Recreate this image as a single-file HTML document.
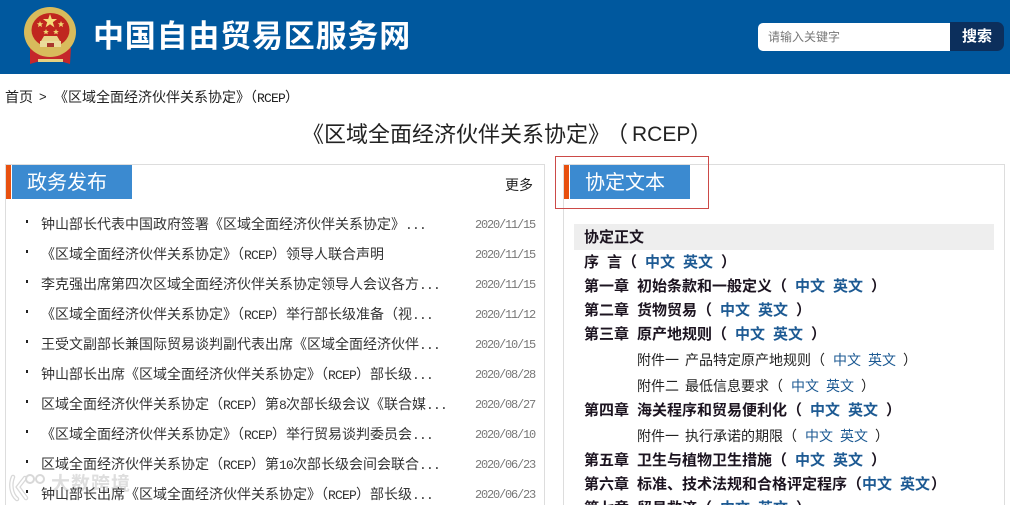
<!DOCTYPE html>
<html lang="zh-CN"><head><meta charset="utf-8"><style>
html,body{margin:0;padding:0;background:#fff}
#p{position:relative;width:1010px;height:505px;overflow:hidden;background:#fff;font-family:"Liberation Sans","Noto Sans CJK SC",sans-serif;color:#222}
#p div{position:absolute;white-space:nowrap}
.r{left:41px;font-size:14px;line-height:20px;height:20px;color:#333}
.m{font-family:"Liberation Mono",monospace;font-size:13px;letter-spacing:-.8px}
.d{left:475px;font:12px/20px "Liberation Mono",monospace;letter-spacing:-1.2px;color:#777;margin-top:1px}
.b{left:26px;width:2px;height:3px;background:#222}
.l{font-size:15px;line-height:20px;height:20px;font-weight:700;color:#1c1420;margin-top:1px}
.n{font-size:14px;line-height:20px;height:20px;color:#222;margin-top:1px}
.k{font-size:14px;line-height:20px;height:20px;color:#1d5a93;margin-top:1px}
.kb{font-size:15px;line-height:20px;height:20px;font-weight:700;color:#1d5a93;margin-top:1px}
</style></head><body><div id="p">
<div style="left:0;top:0;width:1010px;height:74px;background:#00589e"></div>
<svg style="position:absolute;left:20px;top:6px" width="60" height="60" viewBox="0 0 60 60">
<path d="M10 42 L10 58 L20 55 L40 55 L50 58 L51 42 Z" fill="#c5262b"/>
<ellipse cx="30" cy="26" rx="26" ry="25" fill="#d8bb5c"/>
<ellipse cx="30.500" cy="24" rx="19" ry="17" fill="#c0261f"/>
<path d="M13 38h35l-4 8H17z" fill="#d8bb5c"/>
<path d="M18 53h25v3H18z" fill="#e6d080"/>
<path d="M30 8l1.800 5h5.300l-4.300 3.200 1.600 5.200-4.400-3.100-4.400 3.100 1.600-5.200-4.300-3.200h5.300z" fill="#f5dc7a"/>
<g fill="#f0d670">
<path d="M20 15l.9 2.200 2.300.1-1.800 1.500.6 2.300-2-1.300-2 1.300.6-2.300-1.800-1.500 2.300-.1z"/>
<path d="M41 15l.9 2.200 2.300.1-1.800 1.500.6 2.300-2-1.300-2 1.300.6-2.300-1.800-1.500 2.300-.1z"/>
<path d="M26 23l.8 2 2.100.1-1.600 1.300.5 2-1.800-1.100-1.800 1.100.5-2-1.600-1.300 2.100-.1z"/>
<path d="M36 23l.8 2 2.100.1-1.600 1.300.5 2-1.800-1.100-1.800 1.100.5-2-1.600-1.300 2.100-.1z"/>
</g>
<path d="M24 30h13l3 5H21z" fill="#e8d488"/>
<path d="M20 35h21v6H20z" fill="#eadb9b"/>
<path d="M27 37h7v4h-7z" fill="#a9372c"/>
</svg>
<div style="left:93px;top:17px;font-size:31px;line-height:40px;font-weight:700;letter-spacing:.8px;color:#fff">中国自由贸易区服务网</div>
<div style="left:758px;top:23px;width:192px;height:28px;background:#fff;border-radius:5px 0 0 5px"></div>
<div style="left:950px;top:22px;width:54px;height:29px;background:#0c2f5c;border-radius:0 7px 7px 0"></div>
<div style="left:768px;top:27px;font-size:12px;line-height:20px;color:#777">请输入关键字</div>
<div style="left:962px;top:27px;font-size:15px;line-height:20px;font-weight:700;color:#fff">搜索</div>

<div style="left:5px;top:87px;font-size:14px;line-height:20px;color:#222">首页</div>
<div style="left:39px;top:87px;font-size:13px;line-height:20px;color:#222">&gt;</div>
<div style="left:54px;top:87px;font-size:14px;line-height:20px;color:#222">《区域全面经济伙伴关系协定》（<span class="m">RCEP</span>）</div>

<div style="left:302px;top:120px;font-size:22px;line-height:30px;color:#222">《区域全面经济伙伴关系协定》</div>
<div style="left:606px;top:120px;font-size:22px;line-height:30px;color:#222">（</div>
<div style="left:632px;top:120px;font-size:21px;line-height:30px;color:#222">RCEP</div>
<div style="left:690px;top:120px;font-size:22px;line-height:30px;color:#222">）</div>

<div style="left:5px;top:164px;width:538px;height:345px;border:1px solid #ddd"></div>
<div style="left:563px;top:164px;width:440px;height:345px;border:1px solid #ddd"></div>

<svg style="position:absolute;left:8px;top:472px" width="42" height="30" viewBox="0 0 42 30">
<path d="M5 5C2 12 3 22 9 27M17 6L10 15L18 26" fill="none" stroke="#d8d8d8" stroke-width="4.500" stroke-linecap="round"/>
<path d="M5 5C2 12 3 22 9 27M17 6L10 15L18 26" fill="none" stroke="#fff" stroke-width="2" stroke-linecap="round"/>
<circle cx="22" cy="7" r="4" fill="none" stroke="#d8d8d8" stroke-width="2"/><circle cx="32" cy="7" r="4" fill="none" stroke="#d8d8d8" stroke-width="2"/>
</svg>
<div style="left:51px;top:472px;font-size:19px;line-height:26px;font-weight:700;letter-spacing:1px;color:#dedede">大数跨境</div>

<div style="left:6px;top:165px;width:5px;height:34px;background:#e8500f"></div>
<div style="left:12px;top:165px;width:120px;height:34px;background:#3b8ad0"></div>
<div style="left:27px;top:168px;font-size:20px;line-height:30px;color:#fff">政务发布</div>
<div style="left:505px;top:175px;font-size:14px;line-height:20px;color:#222">更多</div>

<div style="left:564px;top:165px;width:5px;height:34px;background:#e8500f"></div>
<div style="left:570px;top:165px;width:120px;height:34px;background:#3b8ad0"></div>
<div style="left:585px;top:168px;font-size:20px;line-height:30px;color:#fff">协定文本</div>
<div style="left:555px;top:156px;width:152px;height:51px;border:1px solid #cc4a48"></div>

<div class="b" style="top:220px"></div><div class="r" style="top:214px">钟山部长代表中国政府签署《区域全面经济伙伴关系协定》<span class="m">...</span></div><div class="d" style="top:214px">2020/11/15</div>
<div class="b" style="top:250px"></div><div class="r" style="top:244px">《区域全面经济伙伴关系协定》（<span class="m">RCEP</span>）领导人联合声明</div><div class="d" style="top:244px">2020/11/15</div>
<div class="b" style="top:280px"></div><div class="r" style="top:274px">李克强出席第四次区域全面经济伙伴关系协定领导人会议各方<span class="m">...</span></div><div class="d" style="top:274px">2020/11/15</div>
<div class="b" style="top:310px"></div><div class="r" style="top:304px">《区域全面经济伙伴关系协定》（<span class="m">RCEP</span>）举行部长级准备（视<span class="m">...</span></div><div class="d" style="top:304px">2020/11/12</div>
<div class="b" style="top:340px"></div><div class="r" style="top:334px">王受文副部长兼国际贸易谈判副代表出席《区域全面经济伙伴<span class="m">...</span></div><div class="d" style="top:334px">2020/10/15</div>
<div class="b" style="top:370px"></div><div class="r" style="top:364px">钟山部长出席《区域全面经济伙伴关系协定》（<span class="m">RCEP</span>）部长级<span class="m">...</span></div><div class="d" style="top:364px">2020/08/28</div>
<div class="b" style="top:400px"></div><div class="r" style="top:394px">区域全面经济伙伴关系协定（<span class="m">RCEP</span>）第<span class="m">8</span>次部长级会议《联合媒<span class="m">...</span></div><div class="d" style="top:394px">2020/08/27</div>
<div class="b" style="top:430px"></div><div class="r" style="top:424px">《区域全面经济伙伴关系协定》（<span class="m">RCEP</span>）举行贸易谈判委员会<span class="m">...</span></div><div class="d" style="top:424px">2020/08/10</div>
<div class="b" style="top:460px"></div><div class="r" style="top:454px">区域全面经济伙伴关系协定（<span class="m">RCEP</span>）第<span class="m">10</span>次部长级会间会联合<span class="m">...</span></div><div class="d" style="top:454px">2020/06/23</div>
<div class="b" style="top:490px"></div><div class="r" style="top:484px">钟山部长出席《区域全面经济伙伴关系协定》（<span class="m">RCEP</span>）部长级<span class="m">...</span></div><div class="d" style="top:484px">2020/06/23</div>

<div style="left:574px;top:224px;width:420px;height:26px;background:#eee"></div>
<div class="l" style="left:584px;top:227px">协定正文</div>

<div class="l" style="left:584px;top:252px">序</div><div class="l" style="left:607px;top:252px">言（</div><div class="kb" style="left:645px;top:252px">中文</div><div class="kb" style="left:683px;top:252px">英文</div><div class="l" style="left:721px;top:252px">）</div>

<div class="l" style="left:584px;top:276px">第一章</div><div class="l" style="left:637px;top:276px">初始条款和一般定义（</div><div class="kb" style="left:795px;top:276px">中文</div><div class="kb" style="left:833px;top:276px">英文</div><div class="l" style="left:871px;top:276px">）</div>

<div class="l" style="left:584px;top:300px">第二章</div><div class="l" style="left:637px;top:300px">货物贸易（</div><div class="kb" style="left:720px;top:300px">中文</div><div class="kb" style="left:758px;top:300px">英文</div><div class="l" style="left:796px;top:300px">）</div>

<div class="l" style="left:584px;top:324px">第三章</div><div class="l" style="left:637px;top:324px">原产地规则（</div><div class="kb" style="left:735px;top:324px">中文</div><div class="kb" style="left:773px;top:324px">英文</div><div class="l" style="left:811px;top:324px">）</div>

<div class="n" style="left:637px;top:349px">附件一</div><div class="n" style="left:685px;top:349px">产品特定原产地规则（</div><div class="k" style="left:833px;top:349px">中文</div><div class="k" style="left:868px;top:349px">英文</div><div class="n" style="left:903px;top:349px">）</div>

<div class="n" style="left:637px;top:375px">附件二</div><div class="n" style="left:685px;top:375px">最低信息要求（</div><div class="k" style="left:791px;top:375px">中文</div><div class="k" style="left:826px;top:375px">英文</div><div class="n" style="left:861px;top:375px">）</div>

<div class="l" style="left:584px;top:400px">第四章</div><div class="l" style="left:637px;top:400px">海关程序和贸易便利化（</div><div class="kb" style="left:810px;top:400px">中文</div><div class="kb" style="left:848px;top:400px">英文</div><div class="l" style="left:886px;top:400px">）</div>

<div class="n" style="left:637px;top:425px">附件一</div><div class="n" style="left:685px;top:425px">执行承诺的期限（</div><div class="k" style="left:805px;top:425px">中文</div><div class="k" style="left:840px;top:425px">英文</div><div class="n" style="left:875px;top:425px">）</div>

<div class="l" style="left:584px;top:450px">第五章</div><div class="l" style="left:637px;top:450px">卫生与植物卫生措施（</div><div class="kb" style="left:795px;top:450px">中文</div><div class="kb" style="left:833px;top:450px">英文</div><div class="l" style="left:871px;top:450px">）</div>

<div class="l" style="left:584px;top:474px">第六章</div><div class="l" style="left:637px;top:474px">标准、技术法规和合格评定程序（</div><div class="kb" style="left:862px;top:474px">中文</div><div class="kb" style="left:900px;top:474px">英文</div><div class="l" style="left:931px;top:474px">）</div>

<div class="l" style="left:584px;top:498px">第七章</div><div class="l" style="left:637px;top:498px">贸易救济（</div><div class="kb" style="left:720px;top:498px">中文</div><div class="kb" style="left:758px;top:498px">英文</div><div class="l" style="left:796px;top:498px">）</div>
</div></body></html>
